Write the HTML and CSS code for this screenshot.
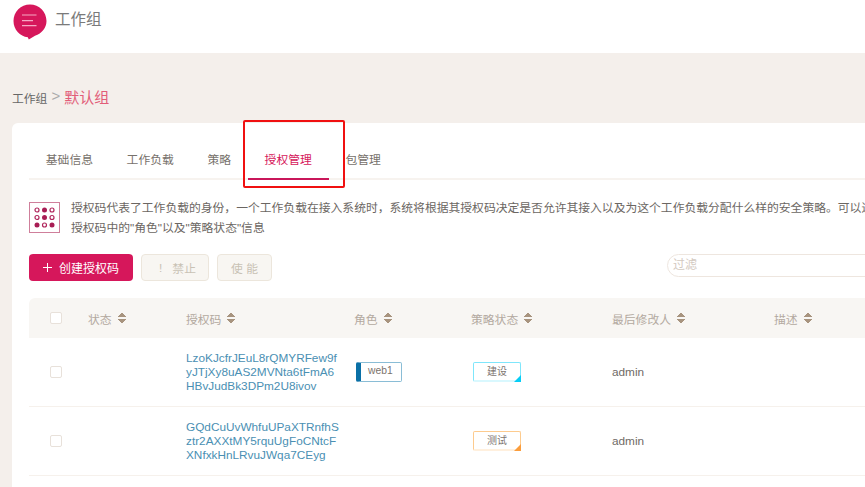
FILE: index.html
```html
<!DOCTYPE html>
<html lang="zh-CN">
<head>
<meta charset="utf-8">
<title>工作组</title>
<link rel="stylesheet" href="styles.css">
</head>
<body>
<header class="top">
  <svg class="logo" width="34" height="36" viewBox="0 0 34 36" aria-hidden="true">
    <path d="M17 0.500C7.800 0.500 0.500 7.800 0.500 17c0 8.600 6.400 15.400 14.300 16.200L15.800 35.500l6.200-3.700C29 29.400 33.500 23.700 33.500 17 33.500 7.800 26.200 0.500 17 0.500z" fill="#d6175b"/>
    <path d="M9 11h14.500M9 16.700h11M9 21.700h14.500" stroke="#f6a9c4" stroke-width="1.200" fill="none"/>
  </svg>
  <span class="top-title">工作组</span>
</header>
<main class="page">
  <nav class="crumb"><span class="crumb-root">工作组</span><span class="crumb-sep">&gt;</span><span class="crumb-cur">默认组</span></nav>
  <section class="card">
    <div class="tabs">
      <span class="tab">基础信息</span>
      <span class="tab">工作负载</span>
      <span class="tab">策略</span>
      <span class="tab active">授权管理</span>
      <span class="tab">包管理</span>
    </div>
    <div class="intro">
      <svg class="intro-icon" width="31" height="31" viewBox="0 0 31 31" aria-hidden="true">
        <rect x="0.500" y="0.500" width="30" height="30" fill="none" stroke="#cf7f9b"/>
        <g fill="none" stroke="#b0265c" stroke-width="1.200">
          <circle cx="8" cy="8" r="2"/><circle cx="23" cy="8" r="2"/><circle cx="8" cy="15.500" r="2"/><circle cx="23" cy="15.500" r="2"/><circle cx="15.500" cy="23" r="2"/>
        </g>
        <g fill="#a81d54">
          <circle cx="15.500" cy="8" r="2.500"/><circle cx="15.500" cy="15.500" r="2.500"/><circle cx="8" cy="23" r="2.500"/><circle cx="23" cy="23" r="2.500"/>
        </g>
      </svg>
      <div class="intro-text">
        <p>授权码代表了工作负载的身份，一个工作负载在接入系统时，系统将根据其授权码决定是否允许其接入以及为这个工作负载分配什么样的安全策略。可以通</p>
        <p>授权码中的"角色"以及"策略状态"信息</p>
      </div>
    </div>
    <div class="toolbar">
      <button class="btn primary">
        <svg class="plus" width="9" height="9" viewBox="0 0 9 9" aria-hidden="true"><path d="M4.500 0v9M0 4.500h9" stroke="#fff" fill="none"/></svg>
        创建授权码
      </button>
      <button class="btn disabled wide"><span class="bang">!</span>禁止</button>
      <button class="btn disabled">使 能</button>
      <div class="filter">过滤</div>
    </div>
    <div class="table">
      <div class="row head">
        <span class="check"></span>
        <span class="th">状态<i class="sort"></i></span>
        <span class="th">授权码<i class="sort"></i></span>
        <span class="th">角色<i class="sort"></i></span>
        <span class="th">策略状态<i class="sort"></i></span>
        <span class="th">最后修改人<i class="sort"></i></span>
        <span class="th">描述<i class="sort"></i></span>
      </div>
      <div class="row body">
        <span class="check"></span>
        <span></span>
        <span class="code">LzoKJcfrJEuL8rQMYRFew9f<br>yJTjXy8uAS2MVNta6tFmA6<br>HBvJudBk3DPm2U8ivov</span>
        <span class="role">web1</span>
        <span class="state build">建设</span>
        <span class="user">admin</span>
        <span></span>
      </div>
      <div class="row body">
        <span class="check"></span>
        <span></span>
        <span class="code">GQdCuUvWhfuUPaXTRnfhS<br>ztr2AXXtMY5rquUgFoCNtcF<br>XNfxkHnLRvuJWqa7CEyg</span>
        <span></span>
        <span class="state test">测试</span>
        <span class="user">admin</span>
        <span></span>
      </div>
    </div>
  </section>
</main>
<div class="callout"></div>
</body>
</html>
```

FILE: styles.css
```css
* { box-sizing: border-box; }
html, body { margin: 0; height: 100%; overflow: hidden; }
body {
  position: relative;
  width: 865px;
  height: 487px;
  background: #f4efeb;
  font-family: "Liberation Sans", "Noto Sans CJK SC", sans-serif;
  font-size: 11.800px;
  color: #6f6a66;
}
.top {
  height: 53px;
  background: #fff;
  display: flex;
  align-items: flex-start;
  padding: 4px 0 0 13px;
  gap: 8px;
}
.top-title { font-size: 15.500px; line-height: 22px; margin-top: 5px; color: #7a7a7a; }
.page { padding: 0 0 0 12px; }
.crumb {
  height: 70px;
  padding: 27px 0 9px;
  display: flex;
  align-items: center;
}
.crumb-root { color: #666; }
.crumb-sep { margin: -3px 4px 0 4px; font-size: 15px; color: #aaa; }
.crumb-cur { font-size: 15px; color: #e25d78; margin-top: -2px; }
.card {
  width: 900px;
  height: 400px;
  background: #fff;
  border-radius: 6px 0 0 0;
  padding: 0 0 0 17px;
}
.tabs {
  height: 57px;
  display: flex;
  align-items: stretch;
  border-bottom: 2px solid #f7f3ef;
}
.tab {
  padding: 28px 16.800px 0;
  line-height: 18px;
  color: #77716b;
  margin-bottom: -2px;
}
.tab.active { color: #d6175b; border-bottom: 2px solid #c9175a; }
.intro { display: flex; gap: 11px; padding-top: 18px; height: 74px; }
.intro-icon { margin-top: 4px; flex: none; }
.intro-text { line-height: 20px; white-space: nowrap; color: #6b6662; }
.intro-text p { margin: 0; }
.toolbar { display: flex; gap: 8px; height: 44px; align-items: flex-start; }
.btn {
  height: 27px;
  padding: 0;
  border-radius: 4px;
  font: inherit;
  width: 55px;
  display: flex;
  align-items: center;
  justify-content: center;
}
.btn.primary { width: 104px; background: #d6175b; border: 0; color: #fff; font-size: 12px; }
.plus { margin-right: 7px; }
.btn.disabled { background: #f8f6f2; border: 1px solid #ece6dc; color: #c9c2b5; }
.btn.wide { width: 68px; padding-left: 5px; }
.bang { margin-right: 10px; }
.filter {
  margin-left: 387px;
  width: 240px;
  height: 23px;
  border: 1px solid #eee6df;
  border-radius: 12px;
  padding-left: 5px;
  line-height: 21px;
  font-size: 12px;
  color: #d3c9bf;
}
.table { width: 871px; }
.row {
  display: grid;
  grid-template-columns: 59px 98px 168px 117px 141px 162px 126px;
  align-items: center;
}
.row.head {
  height: 40px;
  background: #f8f6f3;
  border-radius: 6px 0 0 0;
  color: #b3a9a0;
}
.row.body { height: 69px; border-bottom: 1px solid #f6f1ec; }
.check {
  width: 12px;
  height: 12px;
  margin-left: 21px;
  background: #fff;
  border: 1px solid #e8e1da;
  border-radius: 2px;
}
.th { display: flex; align-items: center; gap: 6px; }
.sort {
  width: 8px;
  height: 12px;
  background:
    linear-gradient(to bottom right, transparent 50%, #a8947f 50%) 0 0 / 4px 5px no-repeat,
    linear-gradient(to bottom left, transparent 50%, #a8947f 50%) 4px 0 / 4px 5px no-repeat,
    linear-gradient(to top right, transparent 50%, #a8947f 50%) 0 7px / 4px 5px no-repeat,
    linear-gradient(to top left, transparent 50%, #a8947f 50%) 4px 7px / 4px 5px no-repeat;
}
.code { line-height: 14px; color: #4a8fb3; white-space: nowrap; }
.role {
  justify-self: start;
  width: 46px;
  height: 20px;
  margin-left: 2px;
  border: 1px solid #8abdd6;
  border-left: 5px solid #0a70a6;
  border-radius: 2px;
  font-size: 10.300px;
  line-height: 16px;
  padding-left: 7px;
  color: #7b726c;
}
.state {
  position: relative;
  justify-self: start;
  width: 48px;
  height: 20px;
  margin-left: 2px;
  border: 1px solid;
  border-bottom-width: 2px;
  border-radius: 2px;
  font-size: 10px;
  line-height: 18px;
  text-align: center;
  color: #7d7570;
}
.state::after {
  content: "";
  position: absolute;
  right: -1px;
  bottom: -2px;
  width: 0;
  height: 0;
  border-style: solid;
  border-width: 0 0 7px 7px;
  border-color: transparent;
}
.state.build { border-color: #7fe6fb #7fe6fb #d9f8fe; }
.state.build::after { border-bottom-color: #05cdf6; }
.state.test { border-color: #fdcb8e #fdcb8e #fff0de; }
.state.test::after { border-bottom-color: #fb9d3c; }
.callout {
  position: absolute;
  left: 243px;
  top: 120px;
  width: 102px;
  height: 68px;
  border: 2px solid #f01010;
  border-radius: 2px;
}
```
